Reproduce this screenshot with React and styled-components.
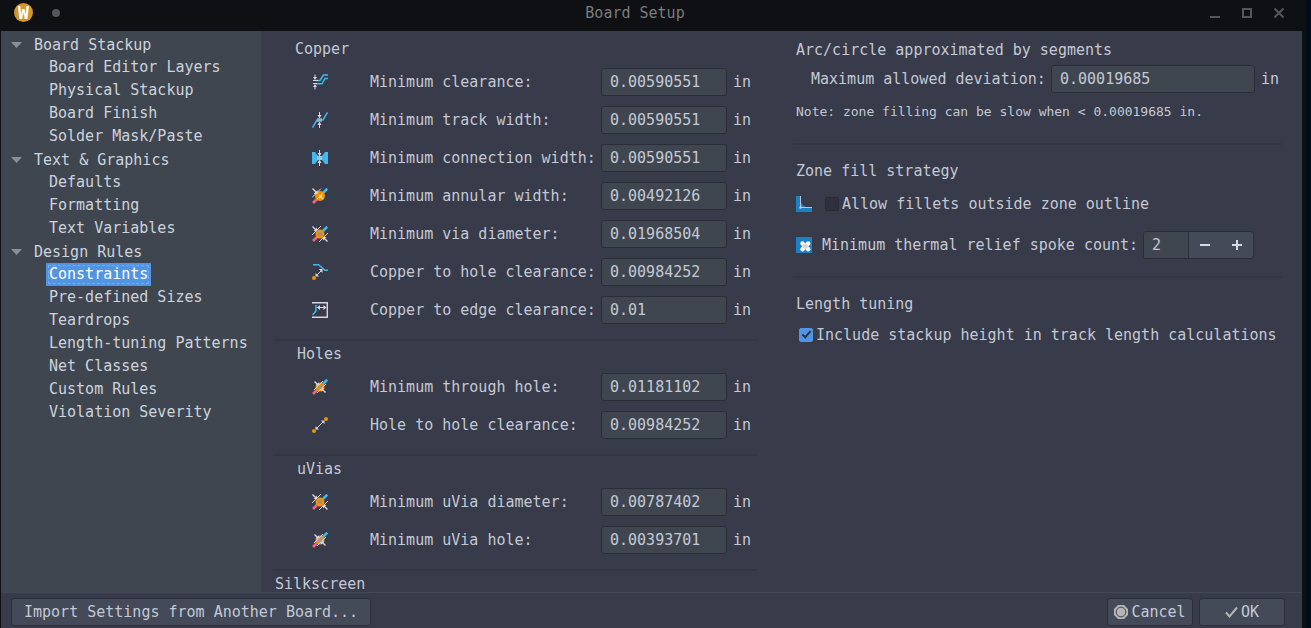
import React from "react";
import styled, { createGlobalStyle } from "styled-components";

const color = {
  bg: "#383b4a",
  base: "#404650",
  button: "#444a58",
  border: "#2b2e39",
  line: "#333643",
  text: "#c3c9d4",
  selected: "#5294e2",
  frame: "#0e1013",
  dim: "#555657",
};

const Global = createGlobalStyle`
  *, *::before, *::after { box-sizing: border-box; }
  body {
    margin: 0;
    background: #000d1b;
    color: ${color.text};
    font: 15px/18px "DejaVu Sans Mono", "Liberation Mono", monospace;
  }
  button, input { font: inherit; color: inherit; }
`;

const Desktop = styled.div`
  height: 100vh;
  padding-right: 5px;
`;

const Window = styled.div`
  height: 100%;
  display: flex;
  flex-direction: column;
  background: ${color.frame};
`;

const TitleBar = styled.header`
  flex: none;
  height: 31px;
  display: flex;
  align-items: center;
  padding: 0 22px 6px 14px;
`;

const AppLogo = styled.span`
  width: 19px;
  height: 19px;
  display: flex;
  align-items: center;
  justify-content: center;
  border-radius: 50%;
  background: #d3962a;
  color: #fff;
  font: bold 18px/19px "DejaVu Sans Mono", monospace;
`;

const PinDot = styled.span`
  width: 8px;
  height: 8px;
  margin-left: 19px;
  border-radius: 50%;
  background: ${color.dim};
`;

const Title = styled.h1`
  flex: 1;
  margin: 0;
  font-size: 15px;
  font-weight: normal;
  text-align: center;
  color: #7b7c7e;
`;

const WindowButtons = styled.div`
  display: flex;
  gap: 22px;
`;

const WindowButton = styled.button`
  width: 10px;
  height: 10px;
  padding: 0;
  border: 0;
  background: none;
  color: ${color.dim};
  svg { display: block; }
`;

const Body = styled.div`
  flex: 1;
  min-height: 0;
  display: flex;
  margin: 0 4px 0 1px;
  background: ${color.bg};
`;

const Sidebar = styled.nav`
  flex: none;
  width: 260px;
  padding-top: 2px;
  background: ${color.base};
  overflow: hidden;
`;

const TreeList = styled.ul`
  margin: 0;
  padding: 0;
  list-style: none;
`;

const TreeGroup = styled.button`
  display: flex;
  align-items: center;
  gap: 12px;
  height: 23px;
  padding: 0 0 0 10px;
  border: 0;
  background: none;
  color: #ccd3dc;
  svg { display: block; fill: #8b8f9b; }
`;

const TreeLink = styled.a`
  display: block;
  width: max-content;
  height: 23px;
  margin-left: 45px;
  padding: 2px;
  border: 1px solid transparent;
  line-height: 17px;
  text-decoration: none;
  color: ${(p) => (p.$selected ? "#fff" : "#ccd3dc")};
  background: ${(p) => (p.$selected ? color.selected : "none")};
  outline: ${(p) => (p.$selected ? "1px dashed #78ace9" : "none")};
  outline-offset: -3px;
`;

const Panel = styled.main`
  flex: 1;
  min-width: 0;
  display: grid;
  grid-template-columns: minmax(0, 484fr) minmax(0, 489fr);
  gap: 36px;
  padding: 0 20px 0 12px;
  overflow: hidden;
`;

const Column = styled.div`
  display: flex;
  flex-direction: column;
  padding-top: ${(p) => p.$top}px;
`;

const RuleGroup = styled.section`
  display: flex;
  flex-direction: column;
  gap: 10px;
  & + & {
    margin-top: 15px;
    padding-top: 4px;
    border-top: 2px solid ${color.line};
  }
`;

const Heading = styled.h2`
  margin: 0;
  padding-left: ${(p) => p.$indent}px;
  font-size: 15px;
  font-weight: normal;
`;

const Rule = styled.div`
  display: flex;
  align-items: center;
  height: 28px;
  padding: 0 6px 0 39px;
`;

const Icon = styled.svg.attrs({ width: 16, height: 16, viewBox: "0 0 16 16", fill: "none", "aria-hidden": true })`
  flex: none;
  display: block;
`;

const RuleLabel = styled.label`
  flex: none;
  width: 231px;
  margin-left: 42px;
  white-space: nowrap;
`;

const Field = styled.input`
  flex: 1;
  min-width: 0;
  height: 28px;
  padding: 0 8px;
  border: 1px solid ${color.border};
  border-radius: 3px;
  background: ${color.base};
  outline: none;
`;

const Unit = styled.span`
  flex: none;
  width: 18px;
  margin-left: 6px;
`;

const OptionGroup = styled.section`
  display: flex;
  flex-direction: column;
  padding-bottom: ${(p) => p.$bottom}px;
  & + & {
    padding-top: 17px;
    border-top: 2px solid ${color.line};
  }
`;

const DeviationRow = styled.div`
  display: flex;
  align-items: center;
  margin-top: 6px;
  padding: 0 3px 0 18px;
`;

const DeviationLabel = styled.label`
  flex: none;
  width: 240px;
  white-space: nowrap;
`;

const Note = styled.p`
  margin: 10px 0 0;
  padding-left: 3px;
  font-size: 13px;
  white-space: nowrap;
`;

const Option = styled.div`
  display: flex;
  align-items: center;
  margin-top: ${(p) => p.$top}px;
  padding-left: ${(p) => p.$indent}px;
  white-space: nowrap;
`;

const CheckLabel = styled.label`
  display: flex;
  align-items: center;
  gap: 3px;
  margin-left: ${(p) => (p.$afterIcon ? 13 : 0)}px;
`;

const Checkbox = styled.input.attrs({ type: "checkbox" })`
  appearance: none;
  flex: none;
  display: flex;
  justify-content: center;
  width: 14px;
  height: 14px;
  margin: 0;
  border: 1px solid #292c36;
  border-radius: 2px;
  background: #2e313b;
  &:checked {
    border-color: ${color.selected};
    background: ${color.selected};
  }
  &:checked::after {
    content: "";
    width: 5px;
    height: 9px;
    border: solid #2b3040;
    border-width: 0 2px 2px 0;
    transform: rotate(42deg);
  }
`;

const SpinLabel = styled.label`
  width: 321px;
  margin-left: 10px;
`;

const Spin = styled.div`
  display: flex;
  flex: none;
  width: 111px;
  height: 28px;
  border: 1px solid ${color.border};
  border-radius: 3px;
  overflow: hidden;
  background: ${color.button};
`;

const SpinField = styled.input`
  width: 45px;
  padding: 0 8px;
  border: 0;
  border-right: 1px solid ${color.border};
  background: ${color.base};
  outline: none;
`;

const SpinButton = styled.button`
  flex: 1;
  display: flex;
  align-items: center;
  justify-content: center;
  padding: 0;
  border: 0;
  background: none;
`;

const Footer = styled.footer`
  flex: none;
  display: flex;
  gap: 6px;
  margin: 0 4px 0 1px;
  padding: 5px 17px 2px 10px;
  border-top: 1px solid #454856;
  background: ${color.bg};
`;

const Button = styled.button`
  display: flex;
  align-items: center;
  justify-content: center;
  gap: 3px;
  height: 28px;
  padding: 0 ${(p) => (p.$wide ? 12 : 6)}px;
  min-width: ${(p) => (p.$wide ? 0 : 86)}px;
  margin-right: ${(p) => (p.$wide ? "auto" : 0)};
  border: 1px solid ${color.border};
  border-radius: 3px;
  background: ${color.button};
  white-space: nowrap;
  svg { flex: none; }
`;

const blue = "#42b8eb";
const copper = "#f29100";
const pale = "#ded3dd";
const red = "#f2647e";

const ViaTracks = () => (
  <>
    <path d="M1 15L6 10" stroke={red} strokeWidth="2.6" />
    <path d="M10 6L15.3 .7" stroke={blue} strokeWidth="2.6" />
  </>
);

const VerticalArrows = ({ x, mid }) => (
  <g>
    <path d={`M${x} ${mid - 8}v5M${x} ${mid + 8}v-5`} stroke={pale} />
    <path
      d={`M${x - 2} ${mid - 5}h4l-2 3.5zM${x - 2} ${mid + 5}h4l-2 -3.5z`}
      fill={pale}
    />
    <path d={`M${x - 2.5} ${mid - 1}h5M${x - 2.5} ${mid + 1}h5`} stroke={pale} />
  </g>
);

const ClearanceIcon = () => (
  <Icon>
    <path d="M4 6.500h4L11.500 1h4.500M4 9.800h6L13 4.500h3" stroke={blue} strokeWidth="1.500" />
    <path d="M1 6.500h5M1 9.500h4" stroke={pale} />
    <path d="M3 .500v3M3 15.500v-3" stroke={pale} />
    <path d="M1 3h4L3 6zM1 13h4L3 10z" fill={pale} />
  </Icon>
);

const TrackIcon = () => (
  <Icon>
    <path d="M.5 15.500L5 8h6L15.500 .500" stroke={blue} strokeWidth="1.500" />
    <VerticalArrows x={7.5} mid={8} />
  </Icon>
);

const ConnectionIcon = () => (
  <Icon>
    <path d="M0 2h3l3 4h4l3-4h3v12h-3l-3-4H6l-3 4H0z" fill={blue} />
    <path d="M5 8h5" stroke={blue} strokeWidth="4" />
    <VerticalArrows x={7.5} mid={8} />
  </Icon>
);

const AnnularIcon = () => (
  <Icon>
    <ViaTracks />
    <circle cx="8" cy="8" r="5" fill={copper} />
    <path d="M0 9.500L9 .500M5 11L11 5" stroke={pale} />
    <path d="M5.500 2v4h-4zM7 7h4L7 11z" fill={pale} />
    <path d="M.5 .500l4 4M8 8l3 3" stroke={pale} strokeWidth="1.400" />
  </Icon>
);

const ViaDiameterIcon = () => (
  <Icon>
    <ViaTracks />
    <circle cx="8" cy="8" r="4.500" fill={copper} />
    <circle cx="8" cy="8" r="2" fill="#929291" />
    <path d="M0 9L9 0M7 16L16 7" stroke={pale} />
    <path d="M5 5V1.500L1.500 5zM11 11v3.500L14.500 11z" fill={pale} />
    <path d="M.5 .500l4 4M15.500 15.500l-4-4" stroke={pale} strokeWidth="1.400" />
  </Icon>
);

const HoleIcon = () => (
  <Icon>
    <ViaTracks />
    <circle cx="8" cy="8" r="4.500" fill={copper} />
    <path d="M2 11L11 2M5 14L14 5" stroke={pale} />
    <path d="M7 6.500V3.500L3.500 6.500zM9 9.500v3L12.500 9.500z" fill={pale} />
    <path d="M2.500 2.500l4 4M13.500 13.500l-4-4" stroke={pale} strokeWidth="1.400" />
    <circle cx="8" cy="8" r="2.200" fill="#a09a91" />
  </Icon>
);

const CopperHoleIcon = () => (
  <Icon>
    <path d="M1 .700h5.500L13 6.300h3" stroke={blue} strokeWidth="1.500" />
    <circle cx="2" cy="14" r="2" fill={copper} />
    <path d="M5 11l4-4" stroke={pale} />
    <path d="M3.500 12.500V9l3.500 3.500zM10.500 5v4L6.800 5z" fill={pale} />
  </Icon>
);

const CopperEdgeIcon = () => (
  <Icon>
    <path d="M0 .700h15.300v14.600H0" stroke={pale} strokeWidth="1.400" />
    <path d="M4 3v6L.500 13" stroke={blue} strokeWidth="1.500" />
    <path d="M5 5.500h9" stroke={pale} />
    <path d="M5 5.500l3-2.500v5zM14.500 5.500l-3-2.500v5z" fill={pale} />
  </Icon>
);

const HoleToHoleIcon = () => (
  <Icon>
    <circle cx="2" cy="14" r="2" fill={copper} />
    <circle cx="14" cy="2" r="2" fill={copper} />
    <path d="M5 11l6-6" stroke={pale} />
    <path d="M3.500 12.500V9L7 12.500zM12.500 3.500V7L9 3.500z" fill={pale} />
  </Icon>
);

const FilletIcon = () => (
  <Icon>
    <path d="M0 0h4v11h12v5H0z" fill="#1a81c4" />
    <path d="M4 2c1 6 3 8.500 10 10H4z" fill="#1a81c4" />
    <path d="M4.500 0v11.500H16" stroke="#b9c4d4" />
    <circle cx="4.500" cy="11.500" r="1.200" fill="#c5cfdc" />
  </Icon>
);

const ThermalIcon = () => (
  <Icon>
    <path d="M0 0h16v16H0z" fill="#1a81c4" />
    <circle cx="9.300" cy="9.300" r="3.500" fill={pale} />
    <g fill="#fff">
      <circle cx="6.500" cy="6.500" r="2.200" />
      <circle cx="12.200" cy="6.500" r="2.200" />
      <circle cx="6.500" cy="12.200" r="2.200" />
      <circle cx="12.200" cy="12.200" r="2.200" />
    </g>
    <circle cx="9.300" cy="9.300" r="2.600" fill={pale} />
  </Icon>
);

const ruleGroups = [
  {
    title: "Copper",
    indent: 22,
    rules: [
      ["Minimum clearance:", "0.00590551", ClearanceIcon],
      ["Minimum track width:", "0.00590551", TrackIcon],
      ["Minimum connection width:", "0.00590551", ConnectionIcon],
      ["Minimum annular width:", "0.00492126", AnnularIcon],
      ["Minimum via diameter:", "0.01968504", ViaDiameterIcon],
      ["Copper to hole clearance:", "0.00984252", CopperHoleIcon],
      ["Copper to edge clearance:", "0.01", CopperEdgeIcon],
    ],
  },
  {
    title: "Holes",
    indent: 24,
    rules: [
      ["Minimum through hole:", "0.01181102", HoleIcon],
      ["Hole to hole clearance:", "0.00984252", HoleToHoleIcon],
    ],
  },
  {
    title: "uVias",
    indent: 24,
    rules: [
      ["Minimum uVia diameter:", "0.00787402", ViaDiameterIcon],
      ["Minimum uVia hole:", "0.00393701", HoleIcon],
    ],
  },
  { title: "Silkscreen", indent: 2, rules: [] },
];

const tree = [
  ["Board Stackup", ["Board Editor Layers", "Physical Stackup", "Board Finish", "Solder Mask/Paste"]],
  ["Text & Graphics", ["Defaults", "Formatting", "Text Variables"]],
  [
    "Design Rules",
    [
      "Constraints",
      "Pre-defined Sizes",
      "Teardrops",
      "Length-tuning Patterns",
      "Net Classes",
      "Custom Rules",
      "Violation Severity",
    ],
  ],
];

const toId = (text) => text.toLowerCase().replace(/[^a-z]+/g, "-");

export default function App() {
  return (
    <Desktop>
      <Global />
      <Window>
        <TitleBar>
          <AppLogo>W</AppLogo>
          <PinDot />
          <Title>Board Setup</Title>
          <WindowButtons>
            <WindowButton aria-label="Minimize">
              <svg width="10" height="10"><path d="M0 8h10v2H0z" fill="currentColor" /></svg>
            </WindowButton>
            <WindowButton aria-label="Maximize">
              <svg width="10" height="10"><path d="M1 1h8v8H1z" fill="none" stroke="currentColor" strokeWidth="2" /></svg>
            </WindowButton>
            <WindowButton aria-label="Close">
              <svg width="10" height="10"><path d="M.5 .5l9 9M9.5 .5l-9 9" stroke="currentColor" strokeWidth="2" /></svg>
            </WindowButton>
          </WindowButtons>
        </TitleBar>

        <Body>
          <Sidebar>
            <TreeList>
              {tree.map(([group, items]) => (
                <li key={group}>
                  <TreeGroup aria-expanded="true">
                    <svg width="11" height="6"><path d="M0 0h11L5.500 6z" /></svg>
                    {group}
                  </TreeGroup>
                  <TreeList>
                    {items.map((item) => (
                      <li key={item}>
                        <TreeLink href={`#${toId(item)}`} $selected={item === "Constraints"}>
                          {item}
                        </TreeLink>
                      </li>
                    ))}
                  </TreeList>
                </li>
              ))}
            </TreeList>
          </Sidebar>

          <Panel>
            <Column $top={9}>
              {ruleGroups.map(({ title, indent, rules }) => (
                <RuleGroup key={title}>
                  <Heading $indent={indent}>{title}</Heading>
                  {rules.map(([label, value, RuleIcon]) => (
                    <Rule key={label}>
                      <RuleIcon />
                      <RuleLabel htmlFor={toId(label)}>{label}</RuleLabel>
                      <Field id={toId(label)} defaultValue={value} />
                      <Unit>in</Unit>
                    </Rule>
                  ))}
                </RuleGroup>
              ))}
            </Column>

            <Column $top={10}>
              <OptionGroup $bottom={22}>
                <Heading $indent={3}>Arc/circle approximated by segments</Heading>
                <DeviationRow>
                  <DeviationLabel htmlFor="deviation">Maximum allowed deviation:</DeviationLabel>
                  <Field id="deviation" defaultValue="0.00019685" />
                  <Unit>in</Unit>
                </DeviationRow>
                <Note>Note: zone filling can be slow when &lt; 0.00019685 in.</Note>
              </OptionGroup>

              <OptionGroup $bottom={17}>
                <Heading $indent={3}>Zone fill strategy</Heading>
                <Option $top={15} $indent={3}>
                  <FilletIcon />
                  <CheckLabel $afterIcon>
                    <Checkbox />
                    Allow fillets outside zone outline
                  </CheckLabel>
                </Option>
                <Option $top={18} $indent={3}>
                  <ThermalIcon />
                  <SpinLabel htmlFor="spokes">Minimum thermal relief spoke count:</SpinLabel>
                  <Spin>
                    <SpinField id="spokes" defaultValue="2" />
                    <SpinButton aria-label="Decrease">
                      <svg width="10" height="10"><path d="M0 4h10v2H0z" fill="#d3dae3" /></svg>
                    </SpinButton>
                    <SpinButton aria-label="Increase">
                      <svg width="10" height="10"><path d="M0 4h10v2H0zM4 0h2v10H4z" fill="#d3dae3" /></svg>
                    </SpinButton>
                  </Spin>
                </Option>
              </OptionGroup>

              <OptionGroup $bottom={0}>
                <Heading $indent={3}>Length tuning</Heading>
                <Option $top={13} $indent={6}>
                  <CheckLabel>
                    <Checkbox defaultChecked />
                    Include stackup height in track length calculations
                  </CheckLabel>
                </Option>
              </OptionGroup>
            </Column>
          </Panel>
        </Body>

        <Footer>
          <Button $wide>Import Settings from Another Board...</Button>
          <Button>
            <svg width="14" height="14" viewBox="0 0 14 14">
              <path d="M4 0h6l4 4v6l-4 4H4l-4-4V4z" fill="#b4b4b2" />
              <circle cx="7" cy="7" r="4.800" fill="none" stroke={color.button} strokeWidth="1" />
            </svg>
            Cancel
          </Button>
          <Button>
            <svg width="13" height="12" viewBox="0 0 13 12">
              <path d="M1 6.500l3.500 4L12 1.500" fill="none" stroke="#b4b4b2" strokeWidth="2" />
            </svg>
            OK
          </Button>
        </Footer>
      </Window>
    </Desktop>
  );
}
